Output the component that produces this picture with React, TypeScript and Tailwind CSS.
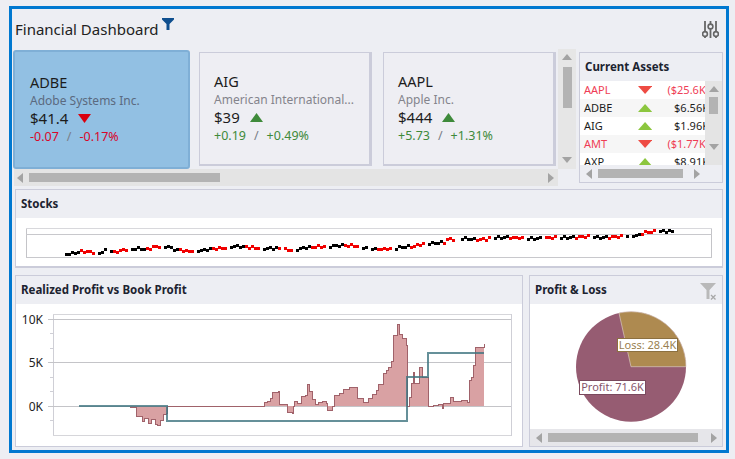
const font = { fontFamily: '"Noto Sans", Tahoma, sans-serif' };

const cards = [
  { symbol: 'ADBE', name: 'Adobe Systems Inc.', price: '$41.4', up: false, delta: '-0.07', pct: '-0.17%', selected: true },
  { symbol: 'AIG', name: 'American International...', price: '$39', up: true, delta: '+0.19', pct: '+0.49%' },
  { symbol: 'AAPL', name: 'Apple Inc.', price: '$444', up: true, delta: '+5.73', pct: '+1.31%' },
];

const assets = [
  { symbol: 'AAPL', up: false, value: '($25.6K)' },
  { symbol: 'ADBE', up: true, value: '$6.56K' },
  { symbol: 'AIG', up: true, value: '$1.96K' },
  { symbol: 'AMT', up: false, value: '($1.77K)' },
  { symbol: 'AXP', up: true, value: '$8.91K' },
];

// traced from the stock line, page coordinates
const stockLine: [number, number][] = [
  [65, 254], [83, 250.5], [97, 253], [103, 250], [113, 252], [120, 250], [133, 248], [147, 249], [155, 246], [167, 246],
  [172, 249], [187, 251], [200, 250], [223, 247], [240, 246], [257, 248], [277, 248], [290, 250], [303, 247], [327, 246],
  [343, 245], [353, 245], [368, 248], [378, 249], [390, 248], [411, 246], [421, 244], [431, 243], [445, 242], [446, 239],
  [461, 238], [481, 239], [495, 237], [511, 237], [531, 238], [550, 237], [568, 237], [585, 236], [601, 237], [618, 236],
  [635, 235], [645, 232], [655, 231], [672, 231],
];

function stockAt(x: number) {
  for (let i = 1; i < stockLine.length; i++) {
    if (x <= stockLine[i][0]) {
      const [x0, y0] = stockLine[i - 1];
      const [x1, y1] = stockLine[i];
      return y0 + ((x - x0) / (x1 - x0)) * (y1 - y0);
    }
  }
  return 231;
}

const stockTicks = Array.from({ length: 203 }, (_, i) => {
  const x = 65 + i * 3;
  return {
    x,
    y: Math.round(stockAt(x) - 1 + Math.sin(i * 2.3) * 1.1),
    red: i % 11 > 4,
    gap: i % 11 === 10 || i % 29 === 14,
  };
});

// top of the realized profit area, traced in page coordinates
const profitArea: [number, number][] = [
  [130, 407], [136, 416], [142, 421], [144, 418], [148, 423], [151, 419], [155, 424], [157, 425], [160, 420], [163, 414], [166, 413], [167, 406],
  [262, 406], [264, 402], [267, 401],
  [270, 398], [272, 392], [278, 391], [279, 404], [285, 404], [287, 412], [292, 413], [293, 406], [294, 401], [297, 403], [301, 396], [305, 395], [307, 384],
  [309, 391], [312, 399], [315, 404], [318, 402], [322, 401], [326, 403], [327, 410], [332, 406], [334, 395], [339, 393], [343, 389], [349, 387], [355, 387],
  [357, 398], [363, 402], [368, 398], [372, 394], [376, 390], [378, 384], [383, 373], [386, 370], [388, 367], [391, 361], [393, 335], [397, 324], [399, 334],
  [402, 338], [406, 345], [407, 406], [409, 397], [411, 383], [413, 372], [414, 383], [419, 367], [422, 377], [427, 377], [428, 406], [433, 405], [438, 404], [442, 408],
  [443, 403], [450, 397], [453, 401], [461, 400], [467, 402], [469, 380], [471, 377], [473, 365], [475, 347], [482, 347], [484, 344],
];

const areaTop = profitArea.map(([x, y]) => `H${x}V${y}`).join('');

const Arrow = ({ dir, className }: { dir: 'l' | 'r' | 'u' | 'd'; className: string }) => {
  const points = { l: '6,0 6,10 0,5', r: '0,0 0,10 6,5', u: '0,6 10,6 5,0', d: '0,0 10,0 5,6' }[dir];
  const wide = dir === 'l' || dir === 'r';
  return (
    <svg width={wide ? 6 : 10} height={wide ? 10 : 6} viewBox={wide ? '0 0 6 10' : '0 0 10 6'} className={className}>
      <polygon points={points} fill="#a3a3a3" />
    </svg>
  );
};

const Triangle = ({ up, color, w, h }: { up: boolean; color: string; w: number; h: number }) => (
  <svg width={w} height={h} viewBox="0 0 16 10" preserveAspectRatio="none">
    <polygon points={up ? '0,10 16,10 8,0' : '0,0 16,0 8,10'} fill={color} />
  </svg>
);

function StockCard({ card }: { card: (typeof cards)[number] }) {
  const color = card.up ? 'text-[#3e8a3a]' : 'text-[#d9062a]';
  return (
    <div
      className={
        card.selected
          ? '-mr-[2px] mt-px flex h-[119px] w-[177px] shrink-0 flex-col rounded-[3px] border-[2px] border-[#7fafd6] bg-[#92c0e3] pl-[15px] pt-[21px]'
          : 'mt-[3px] flex h-[114px] w-[173px] shrink-0 flex-col border border-r-[3px] border-b-[2px] border-[#cbccda] bg-[#eeeef3] pl-[14px] pt-[19px]'
      }
    >
      <div className="text-[14.500px] leading-[19px] text-[#1c1c1c]">{card.symbol}</div>
      <div className={`text-[12px] leading-[17px] ${card.selected ? 'text-[#5b6a80]' : 'text-[#84848c]'}`}>{card.name}</div>
      <div className="flex h-[19px] items-center gap-[10px] text-[15px] leading-[19px] text-[#1c1c1c]">
        {card.price}
        <Triangle up={card.up} color={card.up ? '#3e8a3a' : '#d9000f'} w={13} h={9} />
      </div>
      <div className={`flex gap-[8px] text-[12.500px] leading-[17px] ${color}`}>
        <span>{card.delta}</span>
        <span className="text-[#7a7f88]">/</span>
        <span>{card.pct}</span>
      </div>
    </div>
  );
}

function PanelHeader({ title, height }: { title: string; height: string }) {
  return (
    <div className={`flex items-center pl-[5px] text-[11.500px] font-bold text-[#1c2330] ${height}`}>{title}</div>
  );
}

export default function App() {
  return (
    <div className="h-[459px] w-[735px] overflow-hidden bg-[#edeef3] pl-[9px] pt-[6px]" style={font}>
      <div className="flex h-[447px] w-[720px] flex-col border-[3px] border-[#0078d0] pr-[3px]">
        {/* title bar */}
        <div className="flex h-[40px] shrink-0 justify-between pl-[3px] pr-[3px]">
          <div className="flex">
            <span className="mt-[10px] text-[15px] leading-[20px] text-[#222]">Financial Dashboard</span>
            <svg width="12" height="12" viewBox="0 0 12 12" className="ml-[3px] mt-[9px]">
              <path d="M0 0H12V1.500L7.500 6V12H4.500V6L0 1.500Z" fill="#0f4f8f" />
            </svg>
          </div>
          <svg width="17" height="17" viewBox="0 0 17 17" className="mr-[1px] mt-[12px]" fill="none" stroke="#666666">
            <path d="M3 0V10M3 15V17M8.500 0V3M8.500 8V17M14 0V10M14 15V17" strokeWidth="1.800" />
            <circle cx="3" cy="13" r="2.400" strokeWidth="1.600" />
            <circle cx="8.500" cy="5.500" r="2.400" strokeWidth="1.600" />
            <circle cx="14" cy="13" r="2.400" strokeWidth="1.600" />
          </svg>
        </div>

        {/* cards and current assets */}
        <div className="flex h-[137px] shrink-0 pl-px">
          <div className="flex w-[563px] shrink-0 flex-col">
            <div className="flex h-[120px]">
              <div className="flex w-[545px] gap-[11px] overflow-hidden">
                {cards.map((card) => (
                  <StockCard key={card.symbol} card={card} />
                ))}
              </div>
              <div className="flex w-[18px] flex-col items-center bg-[#e6e6e6] pt-[5px]">
                <Arrow dir="u" className="mb-[7px]" />
                <div className="h-[41px] w-[9px] bg-[#b3b3b3]" />
                <Arrow dir="d" className="mt-[49px]" />
              </div>
            </div>
            <div className="ml-px flex h-[17px] w-[544px] items-center bg-[#e4e4e4] pl-[3px]">
              <Arrow dir="l" className="" />
              <div className="ml-[6px] h-[9px] w-[191px] bg-[#b3b3b3]" />
              <Arrow dir="r" className="ml-[328px]" />
            </div>
          </div>

          <div className="ml-[3px] mt-[3px] flex h-[131px] w-[144px] shrink-0 flex-col border border-[#cbccda]">
            <PanelHeader title="Current Assets" height="h-[28px]" />
            <div className="flex h-[84px]">
              <div className="w-[125px] overflow-hidden bg-white">
                {assets.map((asset, i) => (
                  <div
                    key={asset.symbol}
                    className={`flex h-[18px] shrink-0 items-center text-[11px] ${i % 2 === 1 ? 'bg-[#f6f6f6]' : 'bg-white'} ${asset.up ? 'text-[#1c1c1c]' : 'text-[#ef3d55]'}`}
                  >
                    <span className="w-[65px] pl-[4px]">{asset.symbol}</span>
                    <Triangle up={asset.up} color={asset.up ? '#8cc63f' : '#ee4b43'} w={16} h={8} />
                    <span className="ml-[3px] w-[50px] shrink-0 translate-x-[4px] whitespace-nowrap text-right">{asset.value}</span>
                  </div>
                ))}
              </div>
              <div className="flex w-[17px] flex-col items-center bg-[#e4e4e4] pt-[5px]">
                <Arrow dir="u" className="mb-[5px]" />
                <div className="h-[17px] w-[9px] bg-[#b3b3b3]" />
                <Arrow dir="d" className="mt-[30px]" />
              </div>
            </div>
            <div className="flex h-[17px] items-center pl-[6px]">
              <Arrow dir="l" className="" />
              <div className="ml-[6px] h-[9px] w-[85px] bg-[#b3b3b3]" />
              <Arrow dir="r" className="ml-[11px]" />
            </div>
          </div>
        </div>

        {/* stocks */}
        <div className="ml-[3px] mt-[3px] flex h-[79px] w-[708px] shrink-0 flex-col border border-b-[2px] border-[#cbccda]">
          <PanelHeader title="Stocks" height="h-[28px]" />
          <div className="flex-1 bg-white">
            <svg width="706" height="48" viewBox="16 218 706 48" className="block">
              <path d="M26.500 228V257.500M711.500 228V257.500" stroke="#c4c4c8" />
              <path d="M26 228.500H712" stroke="#d8d8dc" />
              <path d="M26 234.500H712M26 257.500H712" stroke="#c8c8cc" />
              {stockTicks
                .filter((t) => !t.gap)
                .map((t) => (
                  <rect key={t.x} x={t.x} y={t.y} width="3" height="3" fill={t.red ? '#f00000' : '#000000'} />
                ))}
            </svg>
          </div>
        </div>

        {/* bottom row */}
        <div className="ml-[3px] mt-[7px] flex h-[172px] w-[708px] shrink-0 gap-[6px]">
          <div className="flex w-[508px] shrink-0 flex-col border border-[#cbccda]">
            <PanelHeader title="Realized Profit vs Book Profit" height="h-[28px]" />
            <div className="flex-1 bg-white">
              <svg width="506" height="142" viewBox="16 304 506 142" className="block" style={{ shapeRendering: 'crispEdges' }}>
                <path d="M53.500 314V435.500M511.500 314V435.500" stroke="#cfcfd6" />
                <path d="M53 314.500H511M53 435.500H511" stroke="#d6d6da" />
                <path d="M48 319.500H511M48 362.500H511M48 406.500H511" stroke="#c4c4c8" />
                <path d="M50 333.500H53M50 348.500H53M50 377.500H53M50 391.500H53M50 420.500H53" stroke="#cfcfd6" />
                <g fontSize="12" fill="#222" textAnchor="end" style={{ shapeRendering: 'auto' }}>
                  <text x="43" y="324">10K</text>
                  <text x="43" y="367">5K</text>
                  <text x="43" y="411">0K</text>
                </g>
                <path d={`M130 406${areaTop}V406Z`} fill="#d9a1a3" />
                <path d={`M130 406.500${areaTop}`} fill="none" stroke="#a0626a" />
                <path d="M79 406H167V420.500H406.500V377H428V353H484" fill="none" stroke="#3f7480" strokeOpacity="0.8" strokeWidth="2" />
              </svg>
            </div>
          </div>

          <div className="flex w-[194px] shrink-0 flex-col border border-[#cbccda]">
            <div className="flex h-[28px] items-center justify-between pr-[5px]">
              <span className="pl-[5px] text-[11.500px] font-bold text-[#1c2330]">Profit &amp; Loss</span>
              <svg width="17" height="17" viewBox="0 0 17 17" className="mt-[2px]">
                <path d="M0 0H16L9.500 7V16H6.500V7Z" fill="#b9b9b9" />
                <path d="M11 12L15.500 16.500M15.500 12L11 16.500" stroke="#a8a8a8" strokeWidth="1.300" />
              </svg>
            </div>
            <div className="relative h-[125px] bg-white">
              <svg width="192" height="125" viewBox="530 304 192 125" className="block">
                <circle cx="631" cy="366.700" r="55" fill="#965c72" />
                <path d="M631 366.700L686 366.700A55 55 0 0 0 619 313Z" fill="#ae8a50" stroke="#d8c8c0" strokeWidth="0.700" />
              </svg>
              <div className="absolute left-[87px] top-[34px] flex h-[14px] w-[61px] items-center justify-center whitespace-nowrap border border-[#8c7040] bg-white text-[11px] text-[#9a7f50]">
                Loss: 28.4K
              </div>
              <div className="absolute left-[49px] top-[76px] flex h-[15px] w-[67px] items-center justify-center whitespace-nowrap border border-[#7a4a5e] bg-white text-[11px] text-[#86566c]">
                Profit: 71.6K
              </div>
            </div>
            <div className="flex h-[17px] items-center bg-[#e6e6ea] pl-[6px]">
              <Arrow dir="l" className="" />
              <div className="ml-[6px] h-[9px] w-[150px] bg-[#b3b3b3]" />
              <Arrow dir="r" className="ml-[13px]" />
            </div>
          </div>
        </div>
      </div>
    </div>
  );
}
